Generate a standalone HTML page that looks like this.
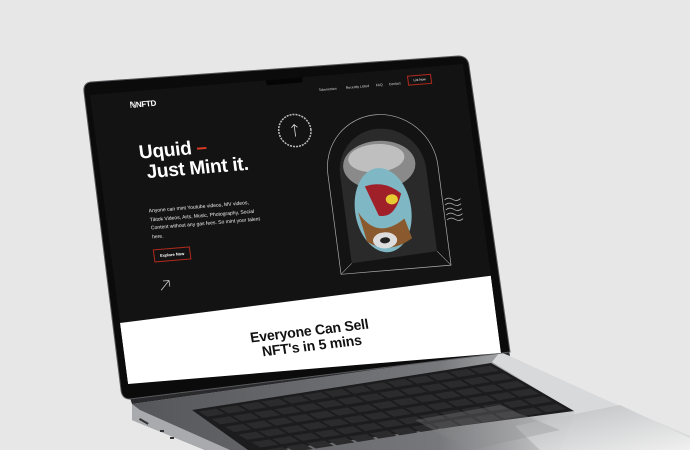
<!DOCTYPE html>
<html><head><meta charset="utf-8"><style>
*{margin:0;padding:0;box-sizing:border-box}
body{width:690px;height:450px;overflow:hidden;background:#e7e7e7;position:relative;font-family:"Liberation Sans",sans-serif}
svg.bg{position:absolute;left:0;top:0}
#scr{position:absolute;left:90px;top:95px;width:373px;height:289px;transform-origin:0 0;transform:matrix(1,-0.0831,0.1315,1,0,0);background:#131313;overflow:hidden;color:#fff}
.a{position:absolute}
.nav{font-size:3.4px;color:#ddd;top:12px}
</style></head><body>
<svg class="bg" width="690" height="450" viewBox="0 0 690 450">
<defs>
<linearGradient id="deck" x1="0" y1="0" x2="1" y2="0">
<stop offset="0" stop-color="#55565a"/><stop offset="0.55" stop-color="#77787b"/><stop offset="0.75" stop-color="#c4c5c7"/><stop offset="1" stop-color="#efefef"/></linearGradient>
<linearGradient id="tp" x1="0" y1="0" x2="1" y2="1"><stop offset="0" stop-color="#b5b6b8"/><stop offset="1" stop-color="#f4f4f4"/></linearGradient>
</defs>
<polygon points="132,404 500,352 606,400 690,436 690,450 205,450 132,420" fill="url(#deck)"/>
<polygon points="132,404 132,420 205,450 230,450 140,410" fill="#a9aaad"/>
<polygon points="500,352 606,400 690,436 690,450 560,450 575,412 492,362" fill="#d8d9db"/>
<polygon points="515,426 620,405 690,438 690,450 540,450" fill="url(#tp)" opacity="0.85"/>
<polygon points="192,410 491,363 574,411 276,450 248,450" fill="#1c1c1e"/>
<g transform="matrix(0.997,-0.157,1.66,0.96,192,410)" fill="#2b2b2d">
<g id="r"><rect x="3" y="2" width="18" height="5.5"/><rect x="24" y="2" width="18" height="5.5"/><rect x="45" y="2" width="18" height="5.5"/><rect x="66" y="2" width="18" height="5.5"/><rect x="87" y="2" width="18" height="5.5"/><rect x="108" y="2" width="18" height="5.5"/><rect x="129" y="2" width="18" height="5.5"/><rect x="150" y="2" width="18" height="5.5"/><rect x="171" y="2" width="18" height="5.5"/><rect x="192" y="2" width="18" height="5.5"/><rect x="213" y="2" width="18" height="5.5"/><rect x="234" y="2" width="18" height="5.5"/><rect x="255" y="2" width="18" height="5.5"/><rect x="276" y="2" width="20" height="5.5"/></g>
<use href="#r" y="8"/><use href="#r" y="16"/><use href="#r" y="24"/><use href="#r" y="32"/><use href="#r" y="40"/>
</g>
<polygon points="415,420 500,405 560,430 470,450" fill="#8a8b8e" opacity="0.3"/>
<rect x="140" y="418" width="10" height="2" fill="#333" transform="rotate(30 140 418)"/>
<rect x="160" y="430" width="4" height="2" fill="#333"/><rect x="170" y="437" width="4" height="2" fill="#333"/>
<polygon points="128,392 508,346 510,356 500,352 132,404" fill="#2a2a2c"/>
<path d="M91,82 L458,56 Q468,56 469,66 L510,352 L130,399 Q122,399 121,390 L84,92 Q83,83 91,82 Z" fill="#0b0b0c" stroke="#58595c" stroke-width="1"/>
</svg>
<div id="scr">
<div class="a" style="left:176px;top:-1px;width:36px;height:6px;background:#050505;border-radius:0 0 2px 2px"></div>
<div class="a" style="left:38px;top:9px;font-size:8px;font-weight:bold;letter-spacing:-0.3px">ℕNFTD</div>
<div class="a nav" style="left:227px">Tokenomics</div>
<div class="a nav" style="left:254px">Recently Listed</div>
<div class="a nav" style="left:284px">FAQ</div>
<div class="a nav" style="left:297px">Contact</div>
<div class="a" style="left:316px;top:7px;width:24px;height:10px;border:0.7px solid #b02a1e;font-size:3.2px;text-align:center;line-height:9px">List Now</div>
<div class="a" style="left:41px;top:52px;font-size:19px;font-weight:bold;line-height:20px;letter-spacing:-0.3px">Uquid <span style="color:#e03a24">–</span><br>&nbsp;Just Mint it.</div>
<div class="a" style="left:43px;top:116px;width:150px;font-size:5px;line-height:8.6px;color:#eee;white-space:nowrap">Anyone can mint Youtube videos, MV videos,<br>Tiktok Videos, Arts, Music, Photography, Social<br>Content without any gas fees. So mint your talent<br>here.</div>
<div class="a" style="left:42px;top:158px;width:37px;height:13px;border:0.8px solid #b02a1e;font-size:4px;font-weight:bold;text-align:center;line-height:12px">Explore Now</div>
<svg class="a" style="left:44px;top:188px" width="12" height="12" viewBox="0 0 12 12"><path d="M1,11 L10,2 M4,2 L10,2 L10,8" stroke="#ccc" stroke-width="0.8" fill="none"/></svg>
<svg class="a" style="left:178px;top:32px" width="40" height="40" viewBox="0 0 40 40"><circle cx="20" cy="20" r="16" fill="none" stroke="#bbb" stroke-width="1.5" stroke-dasharray="2 1"/><path d="M20,26 L20,14 M17,17 L20,14 L23,17" stroke="#ddd" stroke-width="0.8" fill="none"/></svg>
<svg class="a" style="left:215px;top:38px" width="140" height="175" viewBox="0 0 140 175">
<path d="M10,160 L10,60 A55,55 0 0 1 120,60 L120,160 Z" fill="none" stroke="#aaa" stroke-width="0.7"/>
<path d="M22,150 L22,62 A43,43 0 0 1 108,62 L108,145 Z" fill="#2a2a2a"/>
<path d="M10,160 L22,150 M120,160 L108,145" stroke="#999" stroke-width="0.6"/>
<ellipse cx="62" cy="55" rx="36" ry="24" fill="#8a8a8a"/>
<ellipse cx="60" cy="48" rx="28" ry="14" fill="#bfbfbf"/>
<ellipse cx="60" cy="100" rx="28" ry="42" fill="#7fb7c4"/>
<path d="M45,75 Q65,70 80,85 Q70,110 55,105 Z" fill="#a0202a"/>
<ellipse cx="70" cy="90" rx="6" ry="5" fill="#e6cc30"/>
<path d="M35,100 Q50,130 80,110 L85,130 Q60,145 40,130 Z" fill="#8a5a2e"/>
<ellipse cx="58" cy="130" rx="12" ry="8" fill="#ddd"/><ellipse cx="58" cy="130" rx="5" ry="3" fill="#222"/>
<g stroke="#bbb" stroke-width="0.7" fill="none"><path d="M122,95 q4,-3 8,0 t8,0"/><path d="M122,100 q4,-3 8,0 t8,0"/><path d="M122,105 q4,-3 8,0 t8,0"/><path d="M122,110 q4,-3 8,0 t8,0"/><path d="M122,115 q4,-3 8,0 t8,0"/></g>
</svg>
<div class="a" style="left:0;top:228px;width:373px;height:80px;background:#fff;transform:skewY(-2.5deg);transform-origin:0 0"></div>
<div class="a" style="left:0;top:244px;width:373px;text-align:center;color:#111;font-size:14px;font-weight:bold;line-height:15px;letter-spacing:-0.2px;transform:rotate(-2deg)">Everyone Can Sell<br>NFT's in 5 mins</div>
</div>
</body></html>
